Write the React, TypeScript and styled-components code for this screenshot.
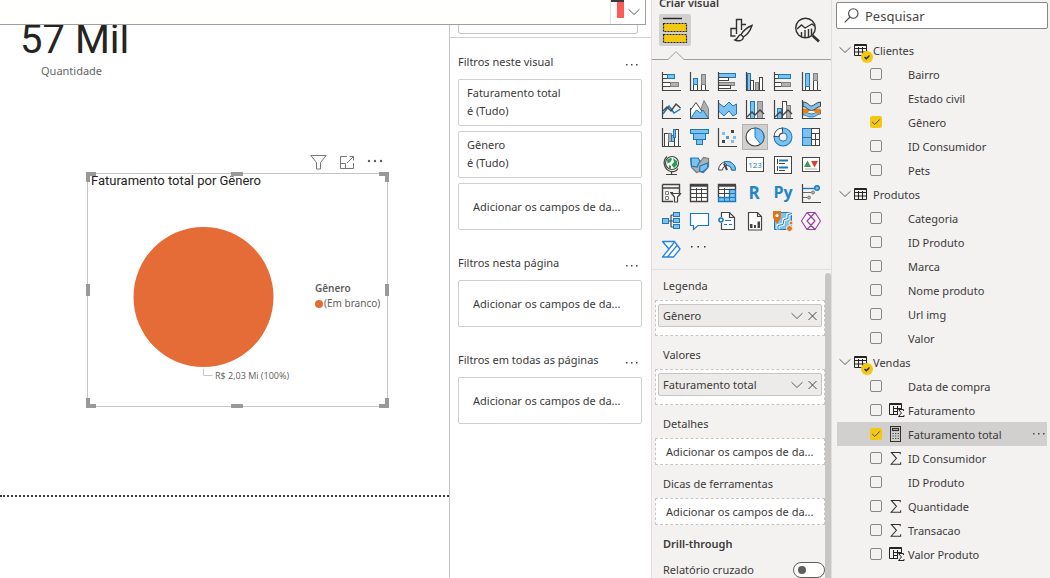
import React from "react";
import styled, { createGlobalStyle, css } from "styled-components";

const c = {
  pane: "#f3f2f1",
  line: "#c8c6c4",
  faint: "#e1dfdd",
  text: "#3b3a39",
  yellow: "#f2c811",
  dark: "#444444",
  grey: "#b0b0b0",
  blue: "#7fc1ee",
  edge: "#1c79bd",
  orange: "#e66c37",
};

const GlobalStyle = createGlobalStyle`
  * { box-sizing: border-box; }
  body { margin: 0; background: #ffffff; }
  body, button, input { font-family: "Noto Sans", "Open Sans", sans-serif; font-size: 11px; color: ${c.text}; }
  button { padding: 0; border: 0; background: none; }
  h1, h2, h3, p, ul { margin: 0; padding: 0; font-size: inherit; font-weight: inherit; }
  ul { list-style: none; }
  svg { display: block; flex: none; overflow: visible; }
`;

const Shell = styled.div`
  display: flex;
  height: 100vh;
  overflow: hidden;
`;

const Workspace = styled.main`
  position: relative;
  flex: 1;
  min-width: 0;
  display: flex;
`;

/* ---------- formula bar that floats over canvas and filters ---------- */

const FormulaBar = styled.div`
  position: absolute;
  z-index: 2;
  top: 0;
  left: 0;
  right: 5px;
  height: 25px;
  display: flex;
  justify-content: flex-end;
  background: #fffffd;
  border-bottom: 1px solid #a19f9d;
  border-right: 1px solid #a19f9d;
`;

const FormulaToggle = styled.button`
  display: flex;
  align-items: center;
  width: 35px;
  background: #ffffff;
  border-left: 1px solid ${c.faint};
`;

/* ---------- report canvas ---------- */

const Canvas = styled.section`
  flex: 1;
  min-width: 0;
  position: relative;
`;

const Page = styled.div`
  position: relative;
  height: 497px;
  border-bottom: 2px dotted #3b3a39;
`;

const CardVisual = styled.div`
  position: absolute;
  left: 20px;
  top: 20px;
  width: 106px;
`;

const CardValue = styled.p`
  font: 400 40px/40px Roboto, sans-serif;
  color: #252423;
  white-space: nowrap;
`;

const CardLabel = styled.p`
  margin-top: 3px;
  line-height: 16px;
  padding-left: 21px;
  color: #666666;
`;

const ChartVisual = styled.article`
  position: absolute;
  left: 87px;
  top: 173px;
  width: 301px;
  height: 234px;
  border: 1px solid ${c.line};
`;

const ChartTools = styled.div`
  position: absolute;
  right: 4px;
  bottom: 236px;
  display: flex;
  gap: 12px;
`;

const ChartTitle = styled.h2`
  padding-left: 3px;
  font: 400 13px/14px Roboto, sans-serif;
  color: #252423;
`;

const ChartBody = styled.div`
  display: flex;
  align-items: center;
`;

const Legend = styled.div`
  font-size: 10px;
  line-height: 15px;
  color: #605e5c;
  white-space: nowrap;
`;

const LegendTitle = styled.h3`
  font-weight: 600;
`;

const LegendItem = styled.p`
  display: flex;
  align-items: center;
  gap: 1px;
`;

const Dot = styled.span`
  width: 8px;
  height: 8px;
  border-radius: 50%;
  background: ${c.orange};
`;

const Handles = styled.svg`
  position: absolute;
  left: -2px;
  top: -2px;
`;

/* ---------- filters pane ---------- */

const FiltersPane = styled.aside`
  width: 202px;
  flex: none;
  border-left: 1px solid ${c.line};
  background: #ffffff;
`;

const FilterSearch = styled.div`
  padding: 6px 13px 3px 8px;
  border-bottom: 1px solid #d2d0ce;
`;

const FilterSearchInput = styled.input`
  display: block;
  width: 100%;
  height: 28px;
  border: 1px solid ${c.line};
  border-radius: 2px;
`;

const FilterSections = styled.div`
  display: flex;
  flex-direction: column;
  gap: 24px;
  padding: 15px 9px 0 8px;
`;

const FilterSection = styled.section`
  display: flex;
  flex-direction: column;
  gap: 5px;
`;

const FilterHeader = styled.header`
  display: flex;
  justify-content: space-between;
  align-items: flex-start;
  height: 20px;
  padding-right: 4px;
  margin-bottom: 1px;
  line-height: 18px;
  white-space: nowrap;

  & > button { padding-top: 10px; }
`;

const FilterCard = styled.div<{ $empty?: boolean }>`
  height: 47px;
  padding: ${(p) => (p.$empty ? "14px 0 0 14px" : "4px 0 0 8px")};
  line-height: 18px;
  white-space: nowrap;
  border: 1px solid #d2d0ce;
  border-radius: 2px;
`;

/* ---------- visualizations pane ---------- */

const VisualPane = styled.aside`
  width: 181px;
  flex: none;
  display: flex;
  flex-direction: column;
  background: ${c.pane};
  border-left: 1px solid ${c.faint};
  border-right: 1px solid ${c.faint};
`;

const PaneTitle = styled.h2`
  margin-top: -5px;
  padding-left: 7px;
  line-height: 16px;
  font-weight: 600;
`;

const ModeTabs = styled.div`
  display: flex;
  gap: 34px;
  padding: 3px 0 5px 7px;
`;

const ModeTab = styled.button<{ $active?: boolean }>`
  display: grid;
  place-items: center;
  width: 32px;
  height: 32px;
  border-radius: 2px;
  background: ${(p) => (p.$active ? "#d2d0ce" : "transparent")};
`;

const TabLine = styled.div`
  display: flex;
  align-items: flex-end;
  height: 9px;

  &::before, &::after { content: ""; height: 1px; background: #a19f9d; }
  &::before { width: 15px; }
  &::after { flex: 1; }
`;

const Gallery = styled.div`
  display: grid;
  grid-template-columns: repeat(6, 28px);
  grid-auto-rows: 28px;
  padding: 7px 0 6px 5px;
  border-bottom: 1px solid ${c.faint};
`;

const VisualButton = styled.button<{ $active?: boolean }>`
  display: grid;
  place-items: center;
  margin: 1px;
  border: 1px solid transparent;
  ${(p) => p.$active && css`background: #d2d0ce; border-color: #b3b0ad;`}
`;

const WellsScroll = styled.div`
  flex: 1;
  min-height: 0;
  display: flex;
  padding-top: 3px;
  overflow: hidden;
`;

const Wells = styled.div`
  flex: 1;
  min-width: 0;
  display: flex;
  flex-direction: column;
  gap: 9px;
  padding: 3px 0 0 3px;
`;

const Scrollbar = styled.div`
  width: 6px;
  border-radius: 3px 3px 0 0;
  background: ${c.line};
`;

const Well = styled.section`
  display: flex;
  flex-direction: column;
  gap: 4px;
`;

const WellLabel = styled.h3<{ $strong?: boolean }>`
  padding-left: 8px;
  line-height: 20px;
  font-weight: ${(p) => (p.$strong ? 600 : 400)};
`;

const DropZone = styled.div<{ $filled?: boolean }>`
  height: ${(p) => (p.$filled ? 36 : 27)}px;
  padding: ${(p) => (p.$filled ? "3px 2px" : "0 0 0 10px")};
  line-height: 25px;
  border: 1px dashed ${c.line};
  background: #ffffff;
  white-space: nowrap;
  overflow: hidden;
`;

const Pill = styled.div`
  display: flex;
  align-items: center;
  gap: 5px;
  height: 23px;
  padding: 0 4px;
  border: 1px solid ${c.line};
  border-radius: 2px;
  background: #edebe9;
`;

const PillName = styled.span`
  flex: 1;
`;

const SwitchRow = styled.label`
  display: flex;
  align-items: center;
  justify-content: space-between;
  height: 18px;
  padding-left: 8px;
  margin-top: -2px;
`;

const Switch = styled.input`
  appearance: none;
  width: 32px;
  height: 16px;
  margin: 0;
  padding: 3px 4px;
  border: 1px solid #605e5c;
  border-radius: 8px;
  background: #ffffff;

  &::before {
    content: "";
    display: block;
    width: 8px;
    height: 8px;
    border-radius: 50%;
    background: #605e5c;
  }
`;

/* ---------- data pane ---------- */

const DataPane = styled.aside`
  width: 218px;
  flex: none;
  padding: 2px 2px 0 4px;
  background: ${c.pane};
`;

const SearchBox = styled.label`
  display: flex;
  align-items: center;
  gap: 6px;
  height: 27px;
  margin-bottom: 9px;
  padding-left: 7px;
  border: 1px solid #8a8886;
  border-radius: 2px;
  background: #ffffff;
`;

const SearchInput = styled.input`
  flex: 1;
  min-width: 0;
  padding: 0;
  border: 0;
  outline: 0;
  background: none;
  font-size: 13px;
  &::placeholder { color: #484644; opacity: 1; }
`;

const TableRow = styled.button`
  display: flex;
  align-items: center;
  width: 100%;
  height: 24px;
  padding-left: 3px;
  gap: 3px;
`;

const TableIcon = styled.span`
  position: relative;
  margin-right: 3px;
`;

const UsedBadge = styled.svg`
  position: absolute;
  left: 7px;
  top: 7px;
`;

const FieldRow = styled.li<{ $active?: boolean }>`
  display: flex;
  align-items: center;
  height: 24px;
  margin: 0 1px;
  padding: 0 2px 0 33px;
  background: ${(p) => (p.$active ? "#d2d0ce" : "transparent")};
`;

const FieldLabel = styled.label`
  flex: 1;
  display: flex;
  align-items: center;
  white-space: nowrap;
`;

const CheckCell = styled.span`
  display: grid;
  place-items: center;
  width: 12px;
  height: 12px;
  & > * { grid-area: 1 / 1; }
  & > svg { pointer-events: none; }
`;

const CheckBox = styled.input`
  appearance: none;
  width: 12px;
  height: 12px;
  margin: 0;
  border: 1px solid #8a8886;
  border-radius: 2px;
  &:checked { border-color: ${c.yellow}; background: ${c.yellow}; }
`;

const TypeCell = styled.span`
  width: 26px;
  padding-left: 7px;
`;

/* ---------- small glyphs ---------- */

const Chevron = () => (
  <svg width="12" height="8" viewBox="0 0 12 8" fill="none" stroke="#605e5c">
    <path d="M.5 1.2 6 6.5 11.5 1.2" />
  </svg>
);

const Cross = () => (
  <svg width="9" height="10" viewBox="0 0 9 10" fill="none" stroke="#484644">
    <path d="M.5 1l8 8M8.5 1l-8 8" />
  </svg>
);

const Dots = () => (
  <svg width="12" height="4" viewBox="0 0 12 4" fill="#484644">
    {[0, 5, 10].map((x) => (
      <rect key={x} x={x} y="1" width="1.5" height="1.5" />
    ))}
  </svg>
);

const Tick = () => (
  <svg width="10" height="8" viewBox="0 0 10 8" fill="none" stroke="#484644">
    <path d="M1.2 4 3.8 6.4 8.8 1.4" />
  </svg>
);

const Magnifier = () => (
  <svg width="15" height="15" viewBox="0 0 15 15" fill="none" stroke="#484644" strokeWidth="1.1">
    <circle cx="9.3" cy="5.5" r="4.7" />
    <path d="M6 9 .7 14.3" />
  </svg>
);

const TableGlyph = () => (
  <svg width="13" height="12" viewBox="0 0 13 12" fill="none" stroke="#252423">
    <path d="M.5.5h12v11H.5zM0 1.5h13M0 4.5h13M0 8h13M4.5 3v9M8.5 3v9" />
  </svg>
);

const SigmaGlyph = () => (
  <svg width="14" height="15" viewBox="0 0 15 15" fill="none" stroke="#323130" strokeWidth="1.1">
    <path d="M12 3V1H2.5L8 7.3 2.3 13.6H12.5V11.5" />
  </svg>
);

const CalculatorGlyph = () => (
  <svg width="15" height="16" viewBox="0 0 15 16" fill="none" stroke="#323130">
    <rect x="1.5" y=".5" width="10" height="15" />
    <rect x="3.5" y="2.5" width="6" height="2" strokeWidth="1.2" />
    <path d="M3.5 7.5h7M3.5 10h7M3.5 12.5h7" strokeDasharray="1.2 1.4" strokeWidth="1.2" />
  </svg>
);

const CalcColumnGlyph = () => (
  <svg width="16" height="14" viewBox="0 0 16 14" fill="none" stroke="#252423">
    <path d="M8.5 11.5H.5V.5h12V5M0 1.5h13M4.5 3v9M8.5 3v9M4 5.5h9M4 8.5h5" />
    <path d="M14.5 8V6.5H9.5L12.5 10 9.5 13.5H15V12" />
  </svg>
);

const typeGlyphs: Record<string, () => React.ReactElement> = {
  sum: SigmaGlyph,
  measure: CalculatorGlyph,
  column: CalcColumnGlyph,
};

/* ---------- gallery drawings, all on a 20 × 20 grid ---------- */

const D = c.dark, G = c.grey, B = c.blue, E = c.edge, W = "#ffffff";
const Axis = () => <path d="M1.5 1V19.5H20" fill="none" stroke={D} strokeWidth="1.2" />;
const Box = (p: { x: number; y: number; w: number; h: number; f?: string; s?: string }) => (
  <rect x={p.x} y={p.y} width={p.w} height={p.h} fill={p.f ?? W} stroke={p.s ?? D} />
);

const drawings: { name: string; art: React.ReactNode }[] = [
  { name: "Barras empilhadas", art: <><Box x={1.5} y={3.5} w={5} h={4} /><Box x={6.5} y={3.5} w={7} h={4} f={B} s={E} /><Box x={1.5} y={11.5} w={8} h={4} /><Box x={9.5} y={11.5} w={8} h={4} f={G} s="#808080" /><Axis /></> },
  { name: "Colunas empilhadas", art: <><Box x={4.5} y={13.5} w={4} h={6} /><Box x={4.5} y={7.5} w={4} h={6} f={B} s={E} /><Box x={12.5} y={13.5} w={4} h={6} /><Box x={12.5} y={3.5} w={4} h={10} f={G} s="#808080" /><Axis /></> },
  { name: "Barras clusterizadas", art: <><Box x={1.5} y={2.5} w={17} h={4} f={B} s={E} /><Box x={1.5} y={6.5} w={10} h={3} /><Box x={1.5} y={11.5} w={16} h={3} f={G} s="#808080" /><Box x={1.5} y={14.5} w={12} h={3} /><Axis /></> },
  { name: "Colunas clusterizadas", art: <><Box x={2.5} y={2.5} w={3} h={17} f={B} s={E} /><Box x={5.5} y={9.5} w={3} h={10} /><Box x={10.5} y={11.5} w={3} h={8} f={G} s="#808080" /><Box x={14.5} y={6.5} w={3} h={13} /><Axis /></> },
  { name: "Barras 100%", art: <><Box x={1.5} y={3.5} w={4} h={4} /><Box x={5.5} y={3.5} w={12} h={4} f={B} s={E} /><Box x={1.5} y={11.5} w={7} h={4} /><Box x={8.5} y={11.5} w={9} h={4} f={G} s="#808080" /><Axis /></> },
  { name: "Colunas 100%", art: <><Box x={4.5} y={15.5} w={4} h={4} /><Box x={4.5} y={2.5} w={4} h={13} f={B} s={E} /><Box x={12.5} y={9.5} w={4} h={10} /><Box x={12.5} y={2.5} w={4} h={7} f={G} s="#808080" /><Axis /></> },

  { name: "Linhas", art: <><path d="M2 15 8 7l5 7 6.5-4" fill="none" stroke={E} strokeWidth="1.4" /><path d="M2 12 6 8l4 4 5-7 4.5 4" fill="none" stroke={D} strokeWidth="1.4" /><Axis /></> },
  { name: "Área", art: <><path d="M9 19 15 1.5l4.5 8V19z" fill={G} stroke="#808080" /><path d="M1.5 19V11L7 3.5l6 9V19z" fill={W} stroke={D} /><path d="M1.5 19.5 7.5 11l4 3 2.5-3 5.5 8.5z" fill={B} stroke={E} /><path d="M1.5 9v10.5H20" fill="none" stroke={D} /></> },
  { name: "Área empilhada", art: <><path d="M1.5 4 7 8l5-5 4 4 3.5-2v10L16 17l-4-5-5 5-5.5-5z" fill={B} stroke={E} /><Axis /></> },
  { name: "Linha e colunas empilhadas", art: <><Box x={5.5} y={2.5} w={4} h={17} f={B} s={E} /><Box x={12.5} y={2.5} w={5} h={17} f={G} s="#808080" /><path d="M2 18 7 13l3 3 5-5 4 4" fill="none" stroke={D} strokeWidth="1.4" /><Axis /></> },
  { name: "Linha e colunas clusterizadas", art: <><Box x={4.5} y={9.5} w={4} h={10} f={B} s={E} /><Box x={9.5} y={2.5} w={4} h={17} /><Box x={13.5} y={6.5} w={4} h={13} f={G} s="#808080" /><path d="M2 18 7 13l3 3 5-5 4 4" fill="none" stroke={D} strokeWidth="1.4" /><Axis /></> },
  { name: "Faixa de opções", art: <><path d="M2 11c4 0 4 4 8.5 4s5-4 9-4v4c-4 0-4 3-9 3S6 16 2 16z" fill={B} stroke={E} /><path d="M2 9.5h4c2 0 2 3 4.5 3s2.5-3 5-3h4v5h-4c-2 0-2-1-5-1s-3 1-5 1H2z" fill="#e8811a" /><path d="M2 3c5 0 6 4 8.5 4S15 3 19.5 3v4.5c-4 0-5 4-9 4s-4.500-4-8.500-4z" fill={B} stroke={D} /><path d="M7.5 13.5c1-1 5-1 6 0" fill="none" stroke={W} strokeWidth="1.4" /><Axis /></> },

  { name: "Cascata", art: <><Box x={3.5} y={6.5} w={4} h={13} /><Box x={7.5} y={6.5} w={3} h={8} f={G} s="#808080" /><Box x={10.5} y={8.5} w={3} h={6} f={B} s={E} /><Box x={13.5} y={2.5} w={4} h={17} /><Box x={12.5} y={2.5} w={2} h={8} f={B} s={E} /><Axis /></> },
  { name: "Funil", art: <><Box x={1.5} y={2.5} w={18} h={4} f={B} s={E} /><Box x={4.5} y={6.5} w={12} h={6} f={B} s={E} /><Box x={7.5} y={12.5} w={6} h={5} f={B} s={E} /></> },
  { name: "Dispersão", art: <><path d="M5 13h3v3H5zM14 3h3v3h-3z" fill={D} /><path d="M5 5h3v3H5zM14 13h3v3h-3z" fill={B} /><path d="M9 9h3v3H9z" fill={E} opacity=".75" /><path d="M16 9h3v3h-3z" fill={B} /><Axis /></> },
  { name: "Pizza", art: <><circle cx="10" cy="10" r="9" fill={W} stroke={D} strokeWidth="1.2" /><path d="M10 10V1A9 9 0 0 1 15.5 17z" fill={B} stroke={E} /></> },
  { name: "Rosca", art: <><circle cx="10" cy="10" r="6.5" fill="none" stroke={E} strokeWidth="6" /><circle cx="10" cy="10" r="6.5" fill="none" stroke={B} strokeWidth="4" /><path d="M3.5 10A6.5 6.5 0 0 1 10 3.5" fill="none" stroke={D} strokeWidth="6" /><path d="M3.5 9A6.5 6.5 0 0 1 9 3.5" fill="none" stroke={W} strokeWidth="4" /></> },
  { name: "Treemap", art: <><Box x={1.5} y={1.5} w={9} h={9} f={B} s={E} /><Box x={1.5} y={10.5} w={9} h={8} f={B} s={E} /><Box x={10.5} y={1.5} w={8} h={5} /><Box x={10.5} y={6.5} w={4} h={6} /><Box x={14.5} y={6.5} w={4} h={6} /><Box x={10.5} y={12.5} w={4} h={6} /><Box x={14.5} y={12.5} w={4} h={6} /></> },

  { name: "Mapa", art: <><circle cx="11" cy="8" r="6.5" fill={W} stroke={D} strokeWidth="1.2" /><path d="M6 5l4-2.5 1 2-2 3-2.500 1zM12 3l4 3v4l-3 3-2.500-3 2.500-3zM8 10l2 1v3l-2-1z" fill="#2f9a50" /><path d="M6 1.500C1 6 3 15 10 16.500c3 .5 6-1 7-3M10.500 16v3M5 19.500h11" fill="none" stroke={D} strokeWidth="1.2" /></> },
  { name: "Mapa coroplético", art: <><path d="M1.5 3.5h6l4 3 3-4 5 1v8l-5 6-4-1-3 1-5-5z" fill={G} stroke="#7a7a7a" strokeWidth="1.2" /><path d="M2 3h7l2 3-3 6-5.5-1zM11 11l8-3-.5 5-5 4-3-1z" fill={B} stroke={E} strokeWidth="1.2" /></> },
  { name: "Medidor", art: <><path d="M1.5 15a8.5 8.5 0 0 1 17 0h-4a4.5 4.5 0 0 0-9 0z" fill={W} stroke={D} /><path d="M7 7a8.5 8.5 0 0 1 11.5 8h-4a4.5 4.5 0 0 0-4-4.5z" fill={B} stroke={E} /><path d="M10 15 7 8.5" stroke={D} strokeWidth="2" /></> },
  { name: "Cartão", art: <><Box x={1.5} y={2.5} w={17} h={14} /><text x="10" y="13" textAnchor="middle" fontSize="8" fontFamily="Open Sans" fill={E}>123</text></> },
  { name: "Cartão de várias linhas", art: <><Box x={1.5} y={1.5} w={17} h={17} /><path d="M4.5 4v5M4.5 11v5" stroke={D} /><path d="M6 5.5h9M6 12.5h9" stroke={E} strokeWidth="2" /><path d="M6 8.5h6M6 15.5h6" stroke={D} /></> },
  { name: "KPI", art: <><Box x={1.5} y={2.5} w={17} h={14} /><path d="M3 12 6.5 5.5 10 12z" fill="#3a9a55" /><path d="M10 6h7l-3.5 6.5z" fill="#e03c31" /><path d="M4 14h12" stroke={G} /></> },

  { name: "Segmentação", art: <><path d="M1.5 1.5h17v11M1.5 1.5v17H12M1.5 5h17" fill="none" stroke={D} strokeWidth="1.4" /><path d="M4.5 8.5h3v3h-3zM4.5 13.5h3v3h-3z" fill={W} stroke="#808080" /><path d="M9 9.5h3" stroke={D} /><path d="M10.5 10.5h9L16.5 14v5h-3v-5z" fill={W} stroke={D} strokeWidth="1.2" /></> },
  { name: "Tabela", art: <><Box x={1.5} y={1.5} w={17} h={17} /><path d="M1.5 1.5h17v17h-17zM1 3h18" fill="none" stroke={D} strokeWidth="1.4" /><path d="M1.5 6.5h17M1.5 10.5h17M1.5 14.5h17M7.5 5v14M12.5 5v14" stroke={D} /></> },
  { name: "Matriz", art: <><Box x={1.5} y={1.5} w={17} h={17} /><path d="M12.5 6h6.5v13H1v-4.500h11.500z" fill={B} /><path d="M1.5 14.5h11v-8h6v12h-17z" fill="none" stroke={E} strokeWidth="1.4" /><path d="M19 1.5H1.5V14M1 3h18M18.5 2v4" fill="none" stroke={D} strokeWidth="1.4" /><path d="M1.5 6.5h17M1.5 10.5h11M7.5 5v9" stroke={D} /><path d="M13 10.5h6M13 14.5h6M7.5 15v4M12.5 15v4" stroke={E} /></> },
  { name: "Visual do R", art: <text x="9" y="16" textAnchor="middle" fontSize="17" fontWeight="700" fontFamily="Open Sans" fill="#2385c9">R</text> },
  { name: "Visual do Python", art: <text x="10" y="15" textAnchor="middle" fontSize="16" fontWeight="700" fontFamily="Open Sans" fill="#2385c9">Py</text> },
  { name: "Influenciadores", art: <><path d="M2 5.5h11" stroke={E} strokeWidth="1.4" /><circle cx="16" cy="5" r="2.3" fill={B} stroke={E} strokeWidth="1.4" /><path d="M2 9.5h8M2 14.5h4" stroke="#666" strokeWidth="1.2" /><circle cx="12" cy="9.5" r="1.5" fill={G} stroke="#777" /><circle cx="8" cy="14.5" r="1.5" fill={G} stroke="#777" /><Axis /></> },

  { name: "Árvore hierárquica", art: <><path d="M6 10h7M10 4v12M10 4h3M10 16h3" fill="none" stroke={D} strokeWidth="1.2" /><Box x={1.5} y={7.5} w={6} h={5} f={B} s={E} /><Box x={12.5} y={1.5} w={6} h={4} f={B} s={E} /><Box x={12.5} y={7.5} w={6} h={4} f={B} s={E} /><Box x={12.5} y={13.5} w={6} h={4} f={B} s={E} /></> },
  { name: "P e R", art: <path d="M1.5 2.5h18v12H9L4.5 18.5v-4h-3z" fill={W} stroke={E} strokeWidth="1.2" /> },
  { name: "Narrativa", art: <><path d="M4.5 6V1.5h8l5 5v12h-13V12M12.5 1.5v5h5" fill={W} stroke={D} strokeWidth="1.2" /><circle cx="4" cy="9" r="2" fill={W} stroke={E} strokeWidth="1.6" /><path d="M8 9.5h6M7 13.5h3M12 13.5h3" stroke={E} /></> },
  { name: "Relatório paginado", art: <><path d="M3.5 1.5h9l4 4v13.5h-13zM12.5 1.5v4h4" fill={W} stroke={D} strokeWidth="1.2" /><path d="M5 13h2.5v4H5zM9 14h2v3H9zM12.5 10.5h2.5V17h-2.5z" fill={D} /></> },
  { name: "Mapa do ArcGIS", art: <><path d="M1.5 1.5h17v17h-17z" fill={B} stroke={E} /><path d="M5 18.5v-4l5-1 1-5 4-1V3.5l4-1" fill="none" stroke={W} strokeWidth="3" /><path d="M5 18.5v-4l5-1 1-5 4-1V3.5l4-1" fill="none" stroke={E} /><path d="M4 13 0 7V0h8v7z" fill="#e2761b" /><circle cx="4" cy="4.5" r="1.6" fill={W} /><circle cx="18" cy="12" r="2" fill="#e2761b" stroke={c.pane} /><circle cx="16.5" cy="17.5" r="3" fill="#e2761b" stroke={c.pane} /></> },
  { name: "Power Apps", art: <path d="M6 1.5h8l5.5 8.5-5.5 8.5H6L.5 10zM6 1.5 14 10l-8 8.5M14 1.5 6 10l8 8.5" fill={W} fillOpacity=".6" stroke="#9a3aa6" strokeWidth="1.1" strokeLinejoin="round" /> },

  { name: "Power Automate", art: <><path d="M1.5 2.5h12L19 10l-6.5 8h-11L8 10z" fill={W} stroke="#2385dd" strokeWidth="1.3" strokeLinejoin="round" /><path d="M8 10l5.5-7M6.500 18 16 6.5" fill="none" stroke="#2385dd" strokeWidth="1.3" /></> },
  { name: "Obter mais visuais", art: <path d="M2 7h1.5v1.5H2zM8.5 7H10v1.5H8.5zM15 7h1.5v1.5H15z" fill="#323130" /> },
];

const BuildIcon = () => (
  <svg width="26" height="26" viewBox="0 0 26 26" fill="none" stroke="#252423">
    <path d="M1 1.5h19" strokeWidth="1.4" />
    <path d="M1.5 6.5h23v8h-23zM1.5 17.5h23v8h-23z" fill={c.yellow} strokeWidth="1.2" strokeDasharray="2 1" />
  </svg>
);

const FormatIcon = () => (
  <svg width="26" height="26" viewBox="0 0 26 26" fill="none" stroke="#323130" strokeWidth="1.4">
    <path d="M7.5 19H3V11.5h5.5M8.5 17V2.5h5V13M13.5 7.5H18" />
    <path d="M24 8.5c-4 1.5-8.5 5-11 9l2.5 2.5c4-2.5 7-7 8.5-11.5zM13 17.5c-3 0-2.5 4-6 5.5 3.5 1.5 8 1 8.5-3" />
  </svg>
);

const AnalyzeIcon = () => (
  <svg width="26" height="26" viewBox="0 0 26 26" fill="none" stroke="#323130" strokeWidth="1.4">
    <circle cx="11.5" cy="11" r="9.8" />
    <path d="M3 12l4.5-4 3.5 3 7-4 2.5 2M7.5 20v-5M11 20.5V13M14.5 20v-8M17.5 18v-6.5" />
    <path d="M18.5 18.5 25 24.5" strokeWidth="2.6" />
  </svg>
);

/* ---------- data ---------- */

type Field = { name: string; type?: string; checked?: boolean; active?: boolean };
const tables: { name: string; used?: boolean; fields: Field[] }[] = [
  {
    name: "Clientes",
    used: true,
    fields: [{ name: "Bairro" }, { name: "Estado civil" }, { name: "Gênero", checked: true }, { name: "ID Consumidor" }, { name: "Pets" }],
  },
  {
    name: "Produtos",
    fields: [{ name: "Categoria" }, { name: "ID Produto" }, { name: "Marca" }, { name: "Nome produto" }, { name: "Url img" }, { name: "Valor" }],
  },
  {
    name: "Vendas",
    used: true,
    fields: [
      { name: "Data de compra" },
      { name: "Faturamento", type: "column" },
      { name: "Faturamento total", type: "measure", checked: true, active: true },
      { name: "ID Consumidor", type: "sum" },
      { name: "ID Produto" },
      { name: "Quantidade", type: "sum" },
      { name: "Transacao", type: "sum" },
      { name: "Valor Produto", type: "column" },
    ],
  },
];

const placeholder = "Adicionar os campos de da...";

const filterSections = [
  { title: "Filtros neste visual", filters: ["Faturamento total", "Gênero"] },
  { title: "Filtros nesta página", filters: [] },
  { title: "Filtros em todas as páginas", filters: [] },
];

const wells = [
  { label: "Legenda", field: "Gênero" },
  { label: "Valores", field: "Faturamento total" },
  { label: "Detalhes" },
  { label: "Dicas de ferramentas" },
];

const PieVisual = () => (
  <ChartVisual>
    <ChartTools>
      <button aria-label="Filtros">
        <svg width="17" height="16" viewBox="0 0 17 16" fill="none" stroke="#7a7876">
          <path d="M.8 1.5h15.4L10.5 8.5v6.5h-4V8.5z" />
        </svg>
      </button>
      <button aria-label="Modo de foco">
        <svg width="16" height="16" viewBox="0 0 16 16" fill="none" stroke="#7a7876">
          <path d="M8 2.5H1.5v12h13V9M1.5 9.5h5v5M8 9l6.5-6.5M10.5 2.5h4V6.5" />
        </svg>
      </button>
      <button aria-label="Mais opções">
        <svg width="16" height="16" viewBox="0 0 16 16" fill="#605e5c">
          <circle cx="2" cy="7" r="1.2" /><circle cx="8" cy="7" r="1.2" /><circle cx="14" cy="7" r="1.2" />
        </svg>
      </button>
    </ChartTools>
    <ChartTitle>Faturamento total por Gênero</ChartTitle>
    <ChartBody>
      <svg width="227" height="216" viewBox="0 0 227 216">
        <circle cx="115.5" cy="109" r="70" fill={c.orange} />
        <path d="M115.5 180.5v7h9" fill="none" stroke={c.line} />
        <text x="127" y="191" fontFamily="Open Sans" fontSize="9" fill="#605e5c">R$ 2,03 Mi (100%)</text>
      </svg>
      <Legend>
        <LegendTitle>Gênero</LegendTitle>
        <LegendItem><Dot />(Em branco)</LegendItem>
      </Legend>
    </ChartBody>
    <Handles width="303" height="236" viewBox="0 0 303 236" fill="none" stroke="#999999" strokeWidth="4">
      <path d="M2 10V2H10M293 2H301V10M301 226V234H293M10 234H2V226" />
      <path d="M145 2h12M145 234h12M2 112v12M301 112v12" />
    </Handles>
  </ChartVisual>
);

export default function App() {
  return (
    <Shell>
      <GlobalStyle />
      <Workspace>
        <FormulaBar>
          <FormulaToggle aria-label="Expandir">
            <svg width="17" height="24" viewBox="0 0 17 24">
              <path d="M6 0h7v18H6z" fill="#ff5a5a" />
              <path d="M0 0h13v2H0z" fill="#3b3a39" />
            </svg>
            <Chevron />
          </FormulaToggle>
        </FormulaBar>

        <Canvas>
          <Page>
            <CardVisual>
              <CardValue>57 Mil</CardValue>
              <CardLabel>Quantidade</CardLabel>
            </CardVisual>
            <PieVisual />
          </Page>
        </Canvas>

        <FiltersPane>
          <FilterSearch>
            <FilterSearchInput aria-label="Pesquisar filtros" />
          </FilterSearch>
          <FilterSections>
            {filterSections.map((s) => (
              <FilterSection key={s.title}>
                <FilterHeader>
                  <h2>{s.title}</h2>
                  <button aria-label="Mais opções"><Dots /></button>
                </FilterHeader>
                {s.filters.map((f) => (
                  <FilterCard key={f}>
                    <p>{f}</p>
                    <p>é (Tudo)</p>
                  </FilterCard>
                ))}
                <FilterCard $empty>{placeholder}</FilterCard>
              </FilterSection>
            ))}
          </FilterSections>
        </FiltersPane>
      </Workspace>

      <VisualPane>
        <PaneTitle>Criar visual</PaneTitle>
        <ModeTabs>
          <ModeTab $active aria-label="Criar visual"><BuildIcon /></ModeTab>
          <ModeTab aria-label="Formatar visual"><FormatIcon /></ModeTab>
          <ModeTab aria-label="Análise"><AnalyzeIcon /></ModeTab>
        </ModeTabs>
        <TabLine>
          <svg width="18" height="9" viewBox="0 0 18 9" fill="none" stroke="#a19f9d">
            <path d="M0 8.5h1L9 .7l8 7.8h1" />
          </svg>
        </TabLine>
        <Gallery>
          {drawings.map((d) => (
            <VisualButton key={d.name} aria-label={d.name} $active={d.name === "Pizza"}>
              <svg width="20" height="20" viewBox="0 0 20 20">{d.art}</svg>
            </VisualButton>
          ))}
        </Gallery>
        <WellsScroll>
          <Wells>
            {wells.map((w) => (
              <Well key={w.label}>
                <WellLabel>{w.label}</WellLabel>
                <DropZone $filled={!!w.field}>
                  {w.field ? (
                    <Pill>
                      <PillName>{w.field}</PillName>
                      <button aria-label="Opções do campo"><Chevron /></button>
                      <button aria-label="Remover campo"><Cross /></button>
                    </Pill>
                  ) : (
                    placeholder
                  )}
                </DropZone>
              </Well>
            ))}
            <WellLabel as="h2" $strong>Drill-through</WellLabel>
            <SwitchRow>
              Relatório cruzado
              <Switch type="checkbox" role="switch" />
            </SwitchRow>
          </Wells>
          <Scrollbar />
        </WellsScroll>
      </VisualPane>

      <DataPane>
        <SearchBox>
          <Magnifier />
          <SearchInput type="text" placeholder="Pesquisar" aria-label="Pesquisar" />
        </SearchBox>
        {tables.map((t) => (
          <section key={t.name}>
            <TableRow>
              <Chevron />
              <TableIcon>
                <TableGlyph />
                {t.used && (
                  <UsedBadge width="12" height="12" viewBox="0 0 12 12">
                    <circle cx="6" cy="6" r="6" fill={c.yellow} />
                    <path d="M3.5 6 5.3 7.7 8.5 4.5" fill="none" stroke="#252423" strokeWidth="1.4" />
                  </UsedBadge>
                )}
              </TableIcon>
              {t.name}
            </TableRow>
            <ul>
              {t.fields.map((f) => {
                const Type = f.type ? typeGlyphs[f.type] : null;
                return (
                  <FieldRow key={f.name} $active={f.active}>
                    <FieldLabel>
                      <CheckCell>
                        <CheckBox type="checkbox" defaultChecked={f.checked} />
                        {f.checked && <Tick />}
                      </CheckCell>
                      <TypeCell>{Type && <Type />}</TypeCell>
                      {f.name}
                    </FieldLabel>
                    {f.active && <button aria-label="Mais opções"><Dots /></button>}
                  </FieldRow>
                );
              })}
            </ul>
          </section>
        ))}
      </DataPane>
    </Shell>
  );
}
